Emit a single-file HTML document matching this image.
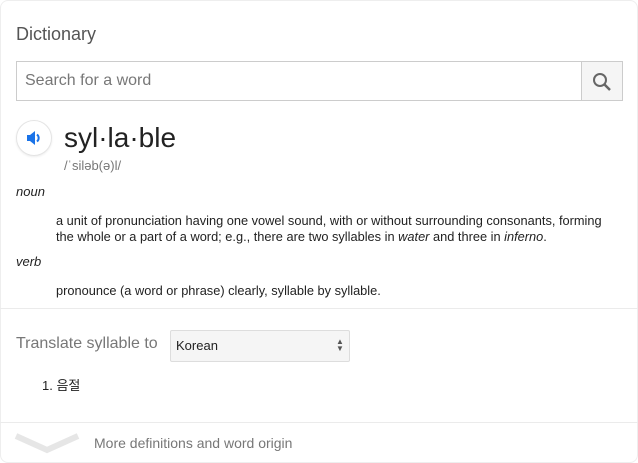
<!DOCTYPE html>
<html><head><style>
body{margin:0;width:638px;height:463px;background:#fff;font-family:"Liberation Sans",Arial,sans-serif;position:relative;overflow:hidden;color:#222}
.card{position:absolute;left:0;top:0;width:636px;height:461px;border:1px solid #eee;border-radius:8px}
.a{position:absolute}
</style></head><body>
<div class="card"></div>
<div class="a" style="left:16px;top:24px;font-size:18px;color:#555">Dictionary</div>
<div class="a" style="left:16px;top:61px;width:564px;height:38px;border:1px solid #ccc;border-right:none"></div>
<div class="a" style="left:25px;top:72px;font-size:16px;color:#777">Search for a word</div>
<div class="a" style="left:581px;top:61px;width:40px;height:38px;background:#f5f5f5;border:1px solid #ccc">
<svg width="40" height="38" viewBox="0 0 40 38"><circle cx="18" cy="18" r="6" fill="none" stroke="#666" stroke-width="2"/><line x1="22.5" y1="22.5" x2="28" y2="28" stroke="#666" stroke-width="2.5"/></svg></div>
<div class="a" style="left:16px;top:120px;width:34px;height:34px;border-radius:50%;border:1px solid #e4e4e4;box-shadow:0 1px 2px rgba(0,0,0,.08)">
<svg width="34" height="34" viewBox="0 0 34 34"><path d="M10 14h3l5-4v14l-5-4h-3z" fill="#1a73e8"/><path d="M20 13.5a4.5 4.5 0 0 1 0 7" stroke="#1a73e8" stroke-width="2" fill="none"/></svg></div>
<div class="a" style="left:64px;top:122px;font-size:28px;color:#222">syl·la·ble</div>
<div class="a" style="left:64px;top:158px;font-size:13px;color:#777">/ˈsiləb(ə)l/</div>
<div class="a" style="left:16px;top:184px;font-size:13px;font-style:italic">noun</div>
<div class="a" style="left:56px;top:213px;font-size:12.8px;line-height:16px;width:560px">a unit of pronunciation having one vowel sound, with or without surrounding consonants, forming the whole or a part of a word; e.g., there are two syllables in <i>water</i> and three in <i>inferno</i>.</div>
<div class="a" style="left:16px;top:254px;font-size:13px;font-style:italic">verb</div>
<div class="a" style="left:56px;top:283px;font-size:12.8px">pronounce (a word or phrase) clearly, syllable by syllable.</div>
<div class="a" style="left:0;top:308px;width:638px;height:1px;background:#ebebeb"></div>
<div class="a" style="left:16px;top:335px;font-size:16px;color:#777">Translate syllable to</div>
<div class="a" style="left:170px;top:330px;width:178px;height:30px;border:1px solid #ddd;border-radius:2px;background:#f5f5f5"></div>
<div class="a" style="left:176px;top:338px;font-size:13px">Korean</div>
<div class="a" style="left:336px;top:338px;font-size:8px;line-height:7px;color:#555">▲<br>▼</div>
<div class="a" style="left:42px;top:375px;font-size:13px;font-family:'Liberation Sans','Noto Sans CJK KR',sans-serif">1. 음절</div>
<div class="a" style="left:0;top:422px;width:638px;height:1px;background:#ebebeb"></div>
<svg class="a" style="left:14px;top:430px" width="66" height="26" viewBox="0 0 66 26"><path d="M2 6l31 14 31-14" stroke="#e6e6e6" stroke-width="6" fill="none"/></svg>
<div class="a" style="left:94px;top:435px;font-size:14px;color:#777">More definitions and word origin</div>
</body></html>
